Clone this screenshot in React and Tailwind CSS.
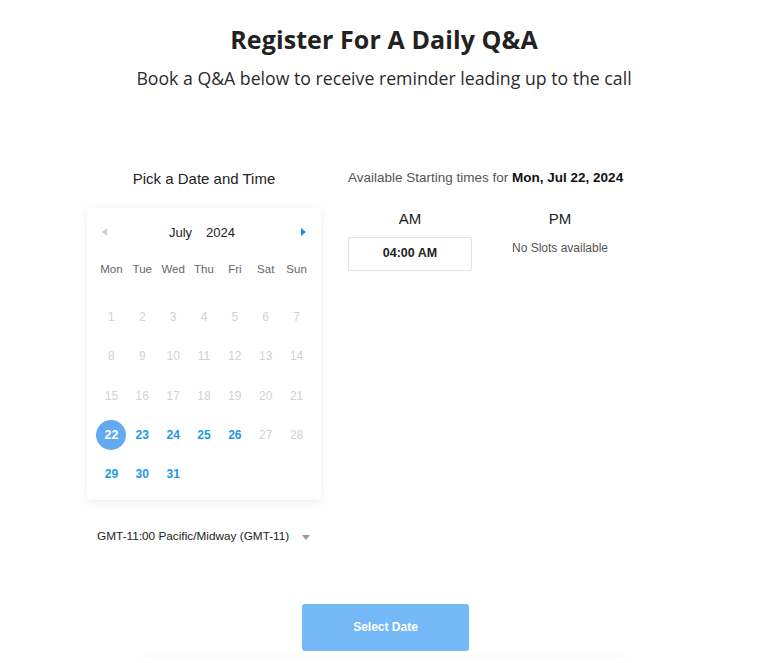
import React from "react";

const weekdays = ["Mon", "Tue", "Wed", "Thu", "Fri", "Sat", "Sun"];

const weeks = [
  [1, 2, 3, 4, 5, 6, 7],
  [8, 9, 10, 11, 12, 13, 14],
  [15, 16, 17, 18, 19, 20, 21],
  [22, 23, 24, 25, 26, 27, 28],
  [29, 30, 31, null, null, null, null],
];

const available = [22, 23, 24, 25, 26, 29, 30, 31];

const DayCell = ({ day }) => {
  if (!day) return <div className="h-[39.4px]" />;
  if (day === 22) {
    return (
      <div className="flex h-[39.4px] items-center justify-center">
        <span className="flex h-[30px] w-[30px] items-center justify-center rounded-full bg-[#64aaf0] text-[12.5px] font-bold text-white">
          22
        </span>
      </div>
    );
  }
  const on = available.includes(day);
  return (
    <div
      className={`flex h-[39.4px] items-center justify-center text-[12px] ${
        on ? "font-bold text-[#1c9ae6]" : "text-[#d2d2d2]"
      }`}
    >
      {day}
    </div>
  );
};

export default function App() {
  return (
    <div className="min-h-[663px] w-full bg-white font-['Liberation_Sans',Arial,sans-serif] text-[#333]">
      <div className="flex flex-col items-center pt-[21px]">
        <h1 className="font-['Open_Sans',sans-serif] text-[25px] font-bold tracking-[0.1px] text-[#222]">
          Register For A Daily Q&amp;A
        </h1>
        <p className="mt-[6px] font-['Open_Sans',sans-serif] text-[17.7px] text-[#2b2b2b]">
          Book a Q&amp;A below to receive reminder leading up to the call
        </p>
      </div>

      <div className="mt-[77px] flex pl-[87px]">
        {/* date column */}
        <div className="flex w-[234px] flex-col">
          <h2 className="text-center text-[15px] font-medium text-[#222]">
            Pick a Date and Time
          </h2>
          <div className="mt-[17px] rounded-[3px] bg-white px-[9px] pb-[6px] pt-[15px] shadow-[0_2px_10px_rgba(0,0,0,0.07)]">
            <div className="flex items-center justify-between px-[6px]">
              <span className="h-0 w-0 border-y-[4px] border-r-[5px] border-y-transparent border-r-[#cfcfcf]" />
              <div className="flex gap-[14px] pr-[4px] text-[13px] text-[#222]">
                <span>July</span>
                <span>2024</span>
              </div>
              <span className="h-0 w-0 border-y-[4px] border-l-[5px] border-y-transparent border-l-[#1a8fe3]" />
            </div>
            <div className="mt-[15px] grid grid-cols-7">
              {weekdays.map((d) => (
                <div
                  key={d}
                  className="flex h-[26px] items-center justify-center text-[11.5px] text-[#666]"
                >
                  {d}
                </div>
              ))}
            </div>
            <div className="mt-[14px] grid grid-cols-7">
              {weeks.flat().map((d, i) => (
                <DayCell key={i} day={d} />
              ))}
            </div>
          </div>
          <div className="mt-[28px] flex items-center pl-[10px] text-[11.8px] text-[#222]">
            <span>GMT-11:00 Pacific/Midway (GMT-11)</span>
            <span className="ml-[13px] mt-[2px] h-0 w-0 border-x-[4.5px] border-t-[5px] border-x-transparent border-t-[#999]" />
          </div>
        </div>

        {/* times column */}
        <div className="ml-[27px] flex flex-col">
          <p className="text-[13.5px] text-[#555]">
            Available Starting times for{" "}
            <span className="font-bold text-[#111]">Mon, Jul 22, 2024</span>
          </p>
          <div className="mt-[20px] flex gap-[26px]">
            <div className="flex w-[124px] flex-col items-center">
              <span className="text-[15px] text-[#222]">AM</span>
              <button className="mt-[6px] flex h-[34px] w-[124px] items-center justify-center rounded-[2px] border border-[#e3e3e3] bg-white text-[12.5px] font-bold text-[#222]">
                04:00 AM
              </button>
            </div>
            <div className="flex w-[124px] flex-col items-center">
              <span className="text-[15px] text-[#222]">PM</span>
              <span className="mt-[8px] text-[12px] text-[#555]">
                No Slots available
              </span>
            </div>
          </div>
        </div>
      </div>

      <div className="mt-[58px] flex justify-center pl-[3px]">
        <button className="h-[47px] w-[167px] rounded-[3px] bg-[#74b8f7] text-[12px] font-bold text-white">
          Select Date
        </button>
      </div>
      <div className="mx-auto mt-[7px] h-[4px] w-[480px] shadow-[0_-2px_6px_rgba(0,0,0,0.03)]" />
    </div>
  );
}
